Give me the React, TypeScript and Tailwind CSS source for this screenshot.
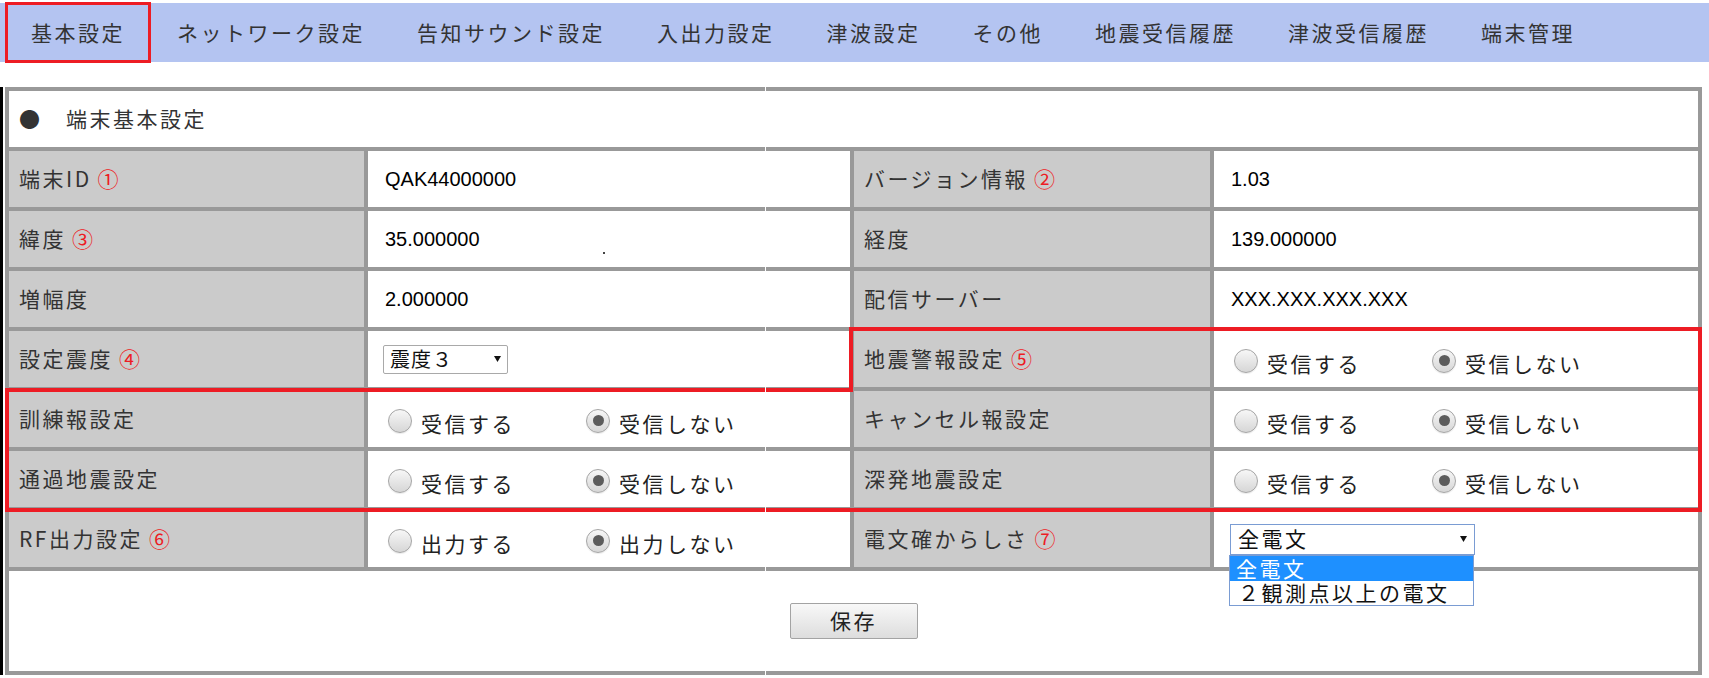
import React from "react";

const tabs = ["基本設定", "ネットワーク設定", "告知サウンド設定", "入出力設定", "津波設定", "その他", "地震受信履歴", "津波受信履歴", "端末管理"];

function Mark({ n }: { n: string }) {
  return <span className="ml-[6px] text-[#ed1c24]">{n}</span>;
}

function Caret() {
  return (
    <svg width="7" height="6" viewBox="0 0 7 6" className="shrink-0">
      <polygon points="0,0 7,0 3.5,6" fill="#111" />
    </svg>
  );
}

function Radio({ checked }: { checked?: boolean }) {
  return (
    <span className="mt-[3px] flex size-[24px] shrink-0 items-center justify-center rounded-full border border-[#a5a5a5] bg-linear-to-b from-[#f7f7f7] to-[#d6d6d6] shadow-[0_1px_1px_rgba(0,0,0,0.08)]">
      {checked && <span className="size-[11px] rounded-full bg-[#5c5c5c]" />}
    </span>
  );
}

function RadioPair({ on, off }: { on: string; off: string }) {
  return (
    <div className="flex h-full items-center bg-white pl-[20px] text-[#222]">
      <label className="flex w-[198px] items-center">
        <Radio />
        <span className="ml-[9px] mt-[10px]">{on}</span>
      </label>
      <label className="flex items-center">
        <Radio checked />
        <span className="ml-[9px] mt-[10px]">{off}</span>
      </label>
    </div>
  );
}

function Label({ children }: { children: React.ReactNode }) {
  return <div className="flex h-[56px] items-center bg-[#cbcbcb] pl-[10px] text-[#333]">{children}</div>;
}

function Value({ children }: { children: React.ReactNode }) {
  return (
    <div className="flex h-[56px] items-center bg-white pl-[17px] font-['Liberation_Sans',Arial,sans-serif] text-[20px] tracking-normal text-black">
      {children}
    </div>
  );
}

export default function App() {
  return (
    <div className="relative h-[678px] w-[1709px] overflow-hidden bg-white font-['Noto_Sans_CJK_JP','Noto_Sans',sans-serif] text-[21px] tracking-[2.5px]">
      <nav className="mt-[3px] flex h-[59px] bg-[#b4c4f1] pl-[5px] text-[#333]">
        {tabs.map((t, i) => (
          <div
            key={t}
            className={`-my-px flex items-center border-[3px] px-[23px] ${i === 0 ? "border-[#ed1c24]" : "border-transparent"}`}
          >
            {t}
          </div>
        ))}
      </nav>

      <div className="mt-[25px] flex">
        <div className="w-[3px] bg-black" />
        <div className="ml-[2px] grid w-[1697px] grid-cols-[355px_482px_356px_484px] gap-[4px] bg-[#999] p-[4px]">
          <div className="col-span-4 flex h-[56px] items-center bg-white pl-[10px] text-[#333]">●　端末基本設定</div>

          <Label>端末ID<Mark n="①" /></Label>
          <Value>QAK44000000</Value>
          <Label>バージョン情報<Mark n="②" /></Label>
          <Value>1.03</Value>

          <Label>緯度<Mark n="③" /></Label>
          <Value>35.000000</Value>
          <Label>経度</Label>
          <Value>139.000000</Value>

          <Label>増幅度</Label>
          <Value>2.000000</Value>
          <Label>配信サーバー</Label>
          <Value>XXX.XXX.XXX.XXX</Value>

          <Label>設定震度<Mark n="④" /></Label>
          <div className="flex h-[56px] items-center bg-white pl-[15px]">
            <div className="flex h-[29px] w-[125px] items-center justify-between rounded-[2px] border border-[#a9a9a9] bg-white pl-[6px] pr-[6px] text-[20px] tracking-[1px] text-[#111]">
              震度３
              <Caret />
            </div>
          </div>
          <Label>地震警報設定<Mark n="⑤" /></Label>
          <RadioPair on="受信する" off="受信しない" />

          <Label>訓練報設定</Label>
          <RadioPair on="受信する" off="受信しない" />
          <Label>キャンセル報設定</Label>
          <RadioPair on="受信する" off="受信しない" />

          <Label>通過地震設定</Label>
          <RadioPair on="受信する" off="受信しない" />
          <Label>深発地震設定</Label>
          <RadioPair on="受信する" off="受信しない" />

          <Label>RF出力設定<Mark n="⑥" /></Label>
          <RadioPair on="出力する" off="出力しない" />
          <Label>電文確からしさ<Mark n="⑦" /></Label>
          <div className="flex h-[56px] items-center bg-white pl-[16px]">
            <div className="relative">
              <div className="flex h-[31px] w-[245px] items-center justify-between border border-[#7a9cd3] bg-white pl-[7px] pr-[7px] text-[#111]">
                全電文
                <Caret />
              </div>
              <div className="absolute left-[-1px] top-full z-10 w-[245px] border border-[#7a9cd3] bg-white text-[21px] leading-none">
                <div className="flex h-[25px] items-center bg-[#1e90ff] pl-[6px] text-white">全電文</div>
                <div className="flex h-[24px] items-center pl-[8px] text-[#111]">２観測点以上の電文</div>
              </div>
            </div>
          </div>

          <div className="col-span-4 flex h-[100px] items-center justify-center bg-white">
            <button className="h-[36px] w-[128px] rounded-[2px] border border-[#a3a3a3] bg-linear-to-b from-[#f8f8f8] to-[#dddddd] text-[21px] text-[#222]">
              保存
            </button>
          </div>
        </div>
      </div>

      {/* annotation overlay */}
      <svg className="pointer-events-none absolute left-0 top-0" width="1709" height="678">
        <path d="M851 329 H1700 V510 H7 V390 H851 Z" fill="none" stroke="#ed1c24" strokeWidth="4" />
      </svg>
      <div className="pointer-events-none absolute left-[765px] top-[87px] h-[591px] w-px bg-white" />
      <div className="pointer-events-none absolute left-[603px] top-[252px] size-[2px] bg-[#444]" />
    </div>
  );
}
